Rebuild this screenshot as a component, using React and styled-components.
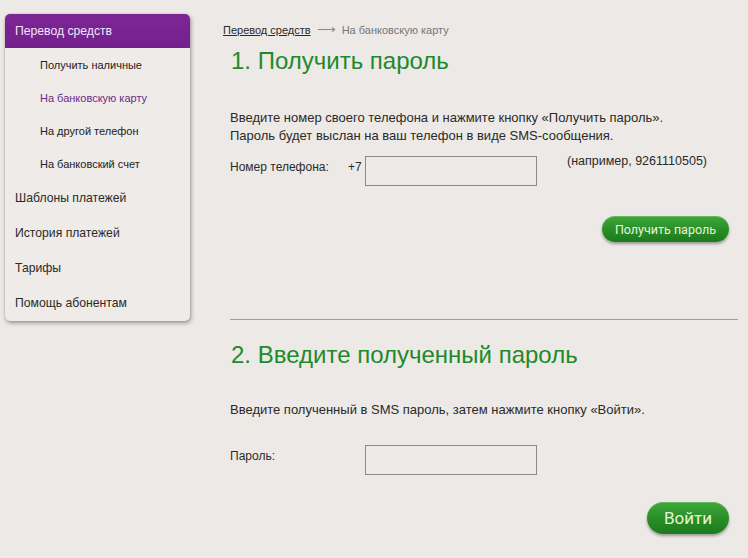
import React from "react";
import styled, { createGlobalStyle } from "styled-components";

const Global = createGlobalStyle`
  html, body { margin: 0; padding: 0; background: #ece9e6; }
  body { font-family: "Liberation Sans", Arial, sans-serif; color: #2a2a2a; }
  * { box-sizing: border-box; }
`;

const Page = styled.div`
  display: flex;
  align-items: flex-start;
  width: 748px;
  height: 558px;
  overflow: hidden;
  background: #ece9e6;
`;

const Sidebar = styled.nav`
  margin: 14px 0 0 5px;
  width: 185px;
  background: #eeebe8;
  border-radius: 5px;
  box-shadow: 1px 2px 4px rgba(0, 0, 0, 0.35), 0 0 2px rgba(0, 0, 0, 0.15);
  overflow: hidden;
  display: flex;
  flex-direction: column;
  padding-bottom: 1px;
`;

const SideHead = styled.div`
  height: 34px;
  display: flex;
  align-items: center;
  padding-left: 10px;
  background: linear-gradient(#7d2596, #74208c);
  color: #f1e6f5;
  font-size: 12.2px;
`;

const SubItem = styled.div`
  height: 33px;
  display: flex;
  align-items: center;
  padding-left: 35px;
  font-size: 11px;
  color: ${(p) => (p.$active ? "#6e2a84" : "#222")};
`;

const MainItem = styled.div`
  height: 35px;
  display: flex;
  align-items: center;
  padding-left: 10px;
  font-size: 12.2px;
  color: #2a2a2a;
`;

const Main = styled.main`
  margin-left: 33px;
  flex: 1;
  display: flex;
  flex-direction: column;
  padding-right: 10px;
`;

const Crumbs = styled.div`
  margin-top: 23px;
  line-height: 14px;
  font-size: 11px;
  color: #777;
  display: flex;
  align-items: center;
  gap: 6px;
`;

const CrumbLink = styled.a`
  color: #2a2a2a;
  text-decoration: underline;
`;

const Arrow = styled.span`
  color: #888;
  font-size: 13px;
`;

const Heading = styled.h2`
  margin: ${(p) => p.$mt}px 0 0 8px;
  font-weight: normal;
  font-size: 24px;
  line-height: 28px;
  color: #1f8a2b;
`;

const Text = styled.p`
  margin: ${(p) => p.$mt}px 0 0 7px;
  font-size: 13px;
  line-height: 18px;
  color: #2a2a2a;
`;

const FieldRow = styled.div`
  margin: ${(p) => p.$mt}px 0 0 7px;
  display: grid;
  grid-template-columns: ${(p) => p.$cols};
  justify-content: start;
  align-items: start;
`;

const Label = styled.span`
  font-size: 12px;
  line-height: 18px;
  padding-top: 2px;
  color: #2a2a2a;
`;

const Input = styled.input`
  width: 172px;
  height: 30px;
  border: 1px solid #8f8985;
  background: #ece9e6;
  outline: none;
`;

const Hint = styled.span`
  margin-left: 30px;
  font-size: 12.5px;
  line-height: 14px;
  margin-top: -2px;
  color: #2a2a2a;
`;

const ButtonRow = styled.div`
  margin-top: ${(p) => p.$mt}px;
  display: flex;
  justify-content: flex-end;
  padding-right: 9px;
`;

const GreenButton = styled.button`
  height: ${(p) => (p.$big ? 32 : 26)}px;
  padding: 0 ${(p) => (p.$big ? 17 : 13)}px;
  border: none;
  border-radius: 16px;
  background: linear-gradient(#3fa83a, #2a8f28 50%, #1c7a1c);
  box-shadow: 0 2px 3px rgba(0, 0, 0, 0.35), inset 0 1px 0 rgba(255, 255, 255, 0.2);
  color: #e4f6d6;
  font-family: Roboto, "Liberation Sans", sans-serif;
  font-size: ${(p) => (p.$big ? 17 : 12.5)}px;
  cursor: pointer;
`;

const Rule = styled.hr`
  margin: ${(p) => p.$mt}px 0 0 7px;
  border: none;
  border-top: 1px solid #a39d98;
  height: 0;
`;

const subItems = ["Получить наличные", "На банковскую карту", "На другой телефон", "На банковский счет"];
const mainItems = ["Шаблоны платежей", "История платежей", "Тарифы", "Помощь абонентам"];

export default function App() {
  return (
    <>
      <Global />
      <Page>
        <Sidebar>
          <SideHead>Перевод средств</SideHead>
          {subItems.map((s, i) => (
            <SubItem key={s} $active={i === 1}>{s}</SubItem>
          ))}
          {mainItems.map((s) => (
            <MainItem key={s}>{s}</MainItem>
          ))}
        </Sidebar>
        <Main>
          <Crumbs>
            <CrumbLink>Перевод средств</CrumbLink>
            <Arrow>⟶</Arrow>
            <span>На банковскую карту</span>
          </Crumbs>
          <Heading $mt={10}>1. Получить пароль</Heading>
          <Text $mt={34}>
            Введите номер своего телефона и нажмите кнопку «Получить пароль».
            <br />
            Пароль будет выслан на ваш телефон в виде SMS-сообщения.
          </Text>
          <FieldRow $mt={11} $cols="118px 17px 172px auto">
            <Label>Номер телефона:</Label>
            <Label>+7</Label>
            <Input />
            <Hint>(например, 9261110505)</Hint>
          </FieldRow>
          <ButtonRow $mt={30}>
            <GreenButton>Получить пароль</GreenButton>
          </ButtonRow>
          <Rule $mt={77} />
          <Heading $mt={21}>2. Введите полученный пароль</Heading>
          <Text $mt={32}>Введите полученный в SMS пароль, затем нажмите кнопку «Войти».</Text>
          <FieldRow $mt={26} $cols="135px 172px">
            <Label>Пароль:</Label>
            <Input />
          </FieldRow>
          <ButtonRow $mt={27}>
            <GreenButton $big>Войти</GreenButton>
          </ButtonRow>
        </Main>
      </Page>
    </>
  );
}
